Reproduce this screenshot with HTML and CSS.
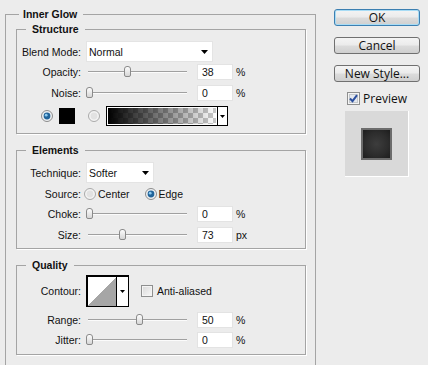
FILE: index.html
```html
<!DOCTYPE html>
<html>
<head>
<meta charset="utf-8">
<link rel="stylesheet" href="styles.css">
</head>
<body>
<div class="dialog">
  <fieldset class="group outer">
    <legend>Inner Glow</legend>

    <fieldset class="group sub structure">
      <legend>Structure</legend>
      <div class="row h21">
        <span class="lbl">Blend Mode:</span>
        <div class="select blend"><span>Normal</span><svg class="arrow" width="7" height="4" viewBox="0 0 7 4"><polygon points="0,0 7,0 3.5,4" fill="#000"/></svg></div>
      </div>
      <div class="row h16 mt2">
        <span class="lbl">Opacity:</span>
        <div class="slider"><div class="track"><div class="thumb" style="left:38%"></div></div></div>
        <div class="num">38</div><span class="unit">%</span>
      </div>
      <div class="row h16 mt5">
        <span class="lbl">Noise:</span>
        <div class="slider"><div class="track"><div class="thumb" style="left:0%"></div></div></div>
        <div class="num">0</div><span class="unit">%</span>
      </div>
      <div class="color-row">
        <span class="radio-cell"><svg class="radio" width="12" height="12" viewBox="0 0 12 12"><circle cx="6" cy="6" r="5.5" fill="#eef0f2" stroke="#8c8c8c"/><circle cx="6" cy="6" r="3.4" fill="#22649a"/><circle cx="5.2" cy="5.2" r="1.4" fill="#8ccaf0"/></svg></span>
        <span class="swatch"></span>
        <span class="radio-cell second-radio"><svg class="radio" width="12" height="12" viewBox="0 0 12 12"><circle cx="6" cy="6" r="5.5" fill="#f3f3f3" stroke="#a9a9a9"/><circle cx="6" cy="6" r="3.4" fill="#e2e2e2"/></svg></span>
        <div class="grad">
          <div class="grad-fill"></div>
          <div class="grad-drop"><svg width="5" height="3" viewBox="0 0 5 3"><polygon points="0,0 5,0 2.5,3" fill="#000"/></svg></div>
        </div>
      </div>
    </fieldset>

    <fieldset class="group sub elements">
      <legend>Elements</legend>
      <div class="row h21">
        <span class="lbl">Technique:</span>
        <div class="select tech"><span>Softer</span><svg class="arrow" width="7" height="4" viewBox="0 0 7 4"><polygon points="0,0 7,0 3.5,4" fill="#000"/></svg></div>
      </div>
      <div class="row h14 mt4">
        <span class="lbl">Source:</span>
        <div class="options">
          <span class="opt"><svg class="radio" width="12" height="12" viewBox="0 0 12 12"><circle cx="6" cy="6" r="5.5" fill="#f3f3f3" stroke="#a9a9a9"/><circle cx="6" cy="6" r="3.4" fill="#e2e2e2"/></svg><span>Center</span></span>
          <span class="opt second"><svg class="radio" width="12" height="12" viewBox="0 0 12 12"><circle cx="6" cy="6" r="5.5" fill="#eef0f2" stroke="#8c8c8c"/><circle cx="6" cy="6" r="3.4" fill="#22649a"/><circle cx="5.2" cy="5.2" r="1.4" fill="#8ccaf0"/></svg><span>Edge</span></span>
        </div>
      </div>
      <div class="row h16 mt5">
        <span class="lbl">Choke:</span>
        <div class="slider"><div class="track"><div class="thumb" style="left:0%"></div></div></div>
        <div class="num">0</div><span class="unit">%</span>
      </div>
      <div class="row h16 mt5">
        <span class="lbl">Size:</span>
        <div class="slider"><div class="track"><div class="thumb" style="left:33%"></div></div></div>
        <div class="num">73</div><span class="unit">px</span>
      </div>
    </fieldset>

    <fieldset class="group sub quality">
      <legend>Quality</legend>
      <div class="row h32">
        <span class="lbl">Contour:</span>
        <div class="contour">
          <div class="contour-curve"></div>
          <div class="contour-drop"><svg width="5" height="3" viewBox="0 0 5 3"><polygon points="0,0 5,0 2.5,3" fill="#000"/></svg></div>
        </div>
        <span class="check-wrap"><span class="check"></span><span>Anti-aliased</span></span>
      </div>
      <div class="row h16 mt5">
        <span class="lbl">Range:</span>
        <div class="slider"><div class="track"><div class="thumb" style="left:50%"></div></div></div>
        <div class="num">50</div><span class="unit">%</span>
      </div>
      <div class="row h16 mt4">
        <span class="lbl">Jitter:</span>
        <div class="slider"><div class="track"><div class="thumb" style="left:0%"></div></div></div>
        <div class="num">0</div><span class="unit">%</span>
      </div>
    </fieldset>
  </fieldset>

  <div class="side">
    <div class="btn default">OK</div>
    <div class="btn">Cancel</div>
    <div class="btn">New Style...</div>
    <div class="preview-row">
      <svg class="pcheck" width="13" height="13" viewBox="0 0 13 13"><rect x="0.5" y="0.5" width="12" height="12" fill="#f4f4f4" stroke="#8e8f8f"/><rect x="2.5" y="2.5" width="8" height="8" fill="#e4e8ee" stroke="#c4c8cc"/><path d="M3 6.5 L5.5 9.2 L10 3.2" fill="none" stroke="#2b4f9e" stroke-width="2"/></svg>
      <span>Preview</span>
    </div>
    <div class="preview-box"><div class="preview-square"></div></div>
  </div>
</div>
</body>
</html>
```

FILE: styles.css
```css
* { box-sizing: border-box; }
html, body { margin: 0; height: 365px; overflow: hidden; }
body {
  background: #ececec;
  font: 10.5px "Liberation Sans", Arial, sans-serif;
  color: #111;
}
.dialog { display: flex; align-items: flex-start; height: 365px; overflow: hidden; padding-top: 8px; }

.group {
  margin: 0;
  min-width: 0;
  border: 1px solid #a4a4a4;
  box-shadow: 1px 1px 0 #fff;
}
.group > legend {
  font-weight: bold;
  line-height: 13px;
  padding: 0 6px 0 4px;
  margin-left: 3px;
}
.outer {
  margin-left: 5px;
  width: 311px;
  padding: 2px 9px 10px 10px;
  border-bottom: none;
  box-shadow: none;
}
.sub { width: 290px; }
.sub > legend { margin-left: 9px; padding: 0 6px; }
.sub + .sub { margin-top: 10px; }
.structure { padding: 5px 0 7px 0; }
.elements { padding: 5px 0 5px 0; }
.quality { padding: 3px 0 6px 0; }

.row { display: flex; align-items: center; }
.h14 { height: 14px; }
.h16 { height: 16px; }
.h21 { height: 21px; }
.h32 { height: 32px; }
.mt2 { margin-top: 2px; }
.mt4 { margin-top: 4px; }
.mt5 { margin-top: 5px; }

.lbl { width: 64px; text-align: right; margin-right: 5px; flex: none; white-space: nowrap; }

.select {
  height: 21px;
  background: #fff;
  border: 1px solid #e4e4e4;
  display: flex;
  align-items: center;
  justify-content: space-between;
  padding: 0 4px 0 2px;
}
.select.blend { width: 127px; }
.select.tech { width: 68px; }
.arrow { display: block; }

.slider { width: 103px; height: 16px; display: flex; align-items: center; padding: 0 2px; margin-right: 8px; flex: none; }
.track {
  position: relative;
  flex: 1;
  height: 2px;
  border-top: 1px solid #a0a0a0;
  border-bottom: 1px solid #fbfbfb;
}
.thumb {
  position: absolute;
  top: -6px;
  margin-left: -2px;
  width: 7px;
  height: 11px;
  border: 1px solid #8a8a8a;
  border-radius: 3px 3px 2px 2px;
  background: linear-gradient(#fdfdfd, #d6d6d6);
}

.num {
  width: 36px;
  height: 16px;
  background: #fff;
  border: 1px solid #e3e3e3;
  padding-left: 4px;
  line-height: 14px;
  flex: none;
}
.unit { margin-left: 3px; }

.radio { display: block; }
.color-row {
  margin-top: 5px;
  height: 20px;
  display: grid;
  grid-template-columns: 12px 16px 12px 122px;
  column-gap: 6px;
  align-items: center;
  padding-left: 24px;
}
.radio-cell { display: block; width: 12px; height: 12px; }
.second-radio { margin-left: 7px; }
.swatch { display: block; width: 16px; height: 16px; background: #000; }
.grad {
  margin-left: 7px;
  width: 122px;
  height: 20px;
  border: 1px solid #000;
  display: flex;
  background: #fff;
}
.grad-fill {
  flex: 1;
  margin: 1px;
  background-color: #fff;
  background-image:
    linear-gradient(to right, #000, rgba(0,0,0,0)),
    linear-gradient(45deg, #c9c9c9 25%, transparent 25%, transparent 75%, #c9c9c9 75%),
    linear-gradient(45deg, #c9c9c9 25%, transparent 25%, transparent 75%, #c9c9c9 75%);
  background-size: 100% 100%, 10px 10px, 10px 10px;
  background-position: 0 0, 0 0, 5px 5px;
}
.grad-drop {
  width: 10px;
  border-left: 1px solid #000;
  display: flex;
  align-items: center;
  justify-content: center;
}
.grad-drop svg, .contour-drop svg { display: block; }

.options { display: flex; align-items: center; margin-left: -2px; }
.opt { display: flex; align-items: center; }
.opt .radio { margin-right: 2px; }
.opt.second { margin-left: 15px; }

.contour {
  width: 43px;
  height: 32px;
  border-style: solid;
  border-color: #000;
  border-width: 2px 1px 1px 2px;
  display: flex;
  background: #fff;
}
.contour-curve {
  width: 29px;
  border-right: 1px solid #000;
  background: linear-gradient(to top left, #a6a6a6 50%, #fff 50%);
}
.contour-drop { flex: 1; display: flex; align-items: center; justify-content: center; }
.check-wrap { display: flex; align-items: center; margin-left: 12px; }
.check {
  width: 12px;
  height: 12px;
  border: 1px solid #8e8f8f;
  background: linear-gradient(135deg, #d8d8d8, #f8f8f8);
  box-shadow: inset 0 0 0 1px #f4f4f4;
  margin-right: 4px;
}

.side {
  margin-left: 18px;
  width: 86px;
  padding-top: 1px;
  display: flex;
  flex-direction: column;
  align-items: center;
  font: 12px "Open Sans", "Liberation Sans", sans-serif;
  color: #111;
}
.btn {
  width: 86px;
  height: 17px;
  border: 1px solid #707070;
  border-radius: 3px;
  background: linear-gradient(#f4f4f4 0%, #ebebeb 48%, #dcdcdc 52%, #cfcfcf 100%);
  line-height: 15px;
  text-align: center;
  margin-bottom: 11px;
}
.btn.default {
  border-color: #3c7fb1;
  box-shadow: inset 0 0 0 1px #a8dcf5;
}
.preview-row { display: flex; align-items: center; height: 14px; margin-top: -2px; }
.pcheck { display: block; margin-right: 3px; }
.preview-box {
  margin-top: 6px;
  width: 64px;
  height: 66px;
  background: #d9d9d9;
  border-right: 1px solid #fff;
  border-bottom: 1px solid #fff;
  display: flex;
  align-items: center;
  justify-content: center;
}
.preview-square {
  width: 31px;
  height: 32px;
  border: 2px solid #6c6c6c;
  background: radial-gradient(circle, #3d3d3d 0%, #2c2c2c 60%, #1d1d1d 100%);
}
```
